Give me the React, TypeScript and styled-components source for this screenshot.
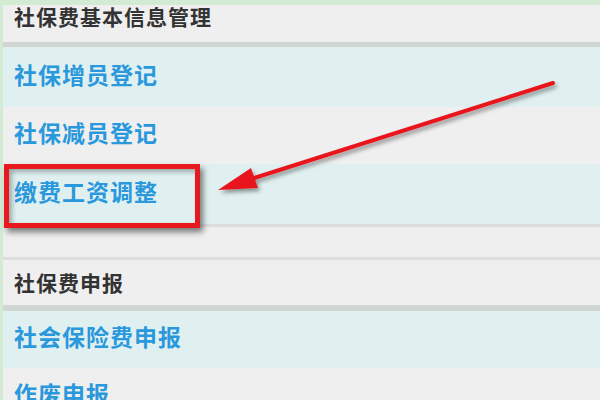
import React from "react";
import styled, { createGlobalStyle } from "styled-components";

const Global = createGlobalStyle`
  html, body { margin: 0; padding: 0; }
  body {
    width: 600px;
    height: 400px;
    overflow: hidden;
    background: #d3ebd2;
    font-family: "Noto Sans CJK SC", "Noto Sans", sans-serif;
  }
`;

const Frame = styled.div`
  position: relative;
  width: 600px;
  height: 400px;
  overflow: hidden;
  padding: 5px 0 0 3px;
  box-sizing: border-box;
`;

const Menu = styled.div`
  display: flex;
  flex-direction: column;
  background: #efefef;
`;

const Header = styled.div<{ $h: number; $pb?: number; $border: number }>`
  display: flex;
  align-items: center;
  box-sizing: border-box;
  height: ${(p) => p.$h}px;
  padding: 0 0 ${(p) => p.$pb ?? 0}px 11px;
  background: #efefef;
  border-bottom: ${(p) => p.$border}px solid #d1d5d3;
  color: #333;
  font-size: 21px;
  font-weight: 700;
  letter-spacing: 1px;
`;

const LinkRow = styled.div<{ $h: number; $alt?: boolean; $border?: number }>`
  display: flex;
  align-items: center;
  box-sizing: border-box;
  height: ${(p) => p.$h}px;
  padding: 0 0 7px 11px;
  background: ${(p) => (p.$alt ? "#efefef" : "#e0f0f0")};
  border-bottom: ${(p) => (p.$border ? `${p.$border}px solid #dcdedd` : "none")};
  color: #2a98dc;
  font-size: 23px;
  font-weight: 700;
  letter-spacing: 1px;
`;

const Spacer = styled.div`
  height: 33px;
  box-sizing: border-box;
  background: #efefef;
  border-bottom: 3px solid #dcdedd;
`;

const Highlight = styled.div`
  position: absolute;
  left: 4px;
  top: 164px;
  width: 196px;
  height: 64px;
  box-sizing: border-box;
  border: 5px solid #e8191e;
  box-shadow: 3px 4px 6px rgba(0, 0, 0, 0.5),
    inset 3px 3px 5px rgba(0, 0, 0, 0.3);
  pointer-events: none;
`;

const Overlay = styled.svg`
  position: absolute;
  left: 0;
  top: 0;
  pointer-events: none;
`;

export default function App() {
  return (
    <>
      <Global />
      <Frame>
        <Menu>
          <Header $h={42} $border={5} $pb={16}>社保费基本信息管理</Header>
          <LinkRow $h={60}>社保增员登记</LinkRow>
          <LinkRow $h={57} $alt>社保减员登记</LinkRow>
          <LinkRow $h={63} $border={3}>缴费工资调整</LinkRow>
          <Spacer />
          <Header $h={51} $border={6} $pb={2}>社保费申报</Header>
          <LinkRow $h={57}>社会保险费申报</LinkRow>
          <LinkRow $h={57} $alt>作废申报</LinkRow>
        </Menu>
        <Highlight />
        <Overlay width={600} height={400} viewBox="0 0 600 400">
          <defs>
            <filter id="sh" x="-10%" y="-30%" width="130%" height="180%">
              <feDropShadow dx="2" dy="3" stdDeviation="2" floodColor="#000" floodOpacity="0.4" />
            </filter>
          </defs>
          <g filter="url(#sh)">
            <line x1={553} y1={83} x2={248} y2={180} stroke="#e8191e" strokeWidth={4} strokeLinecap="round" />
            <polygon points="218,190 251,168 258,188" fill="#e8191e" />
          </g>
        </Overlay>
      </Frame>
    </>
  );
}
